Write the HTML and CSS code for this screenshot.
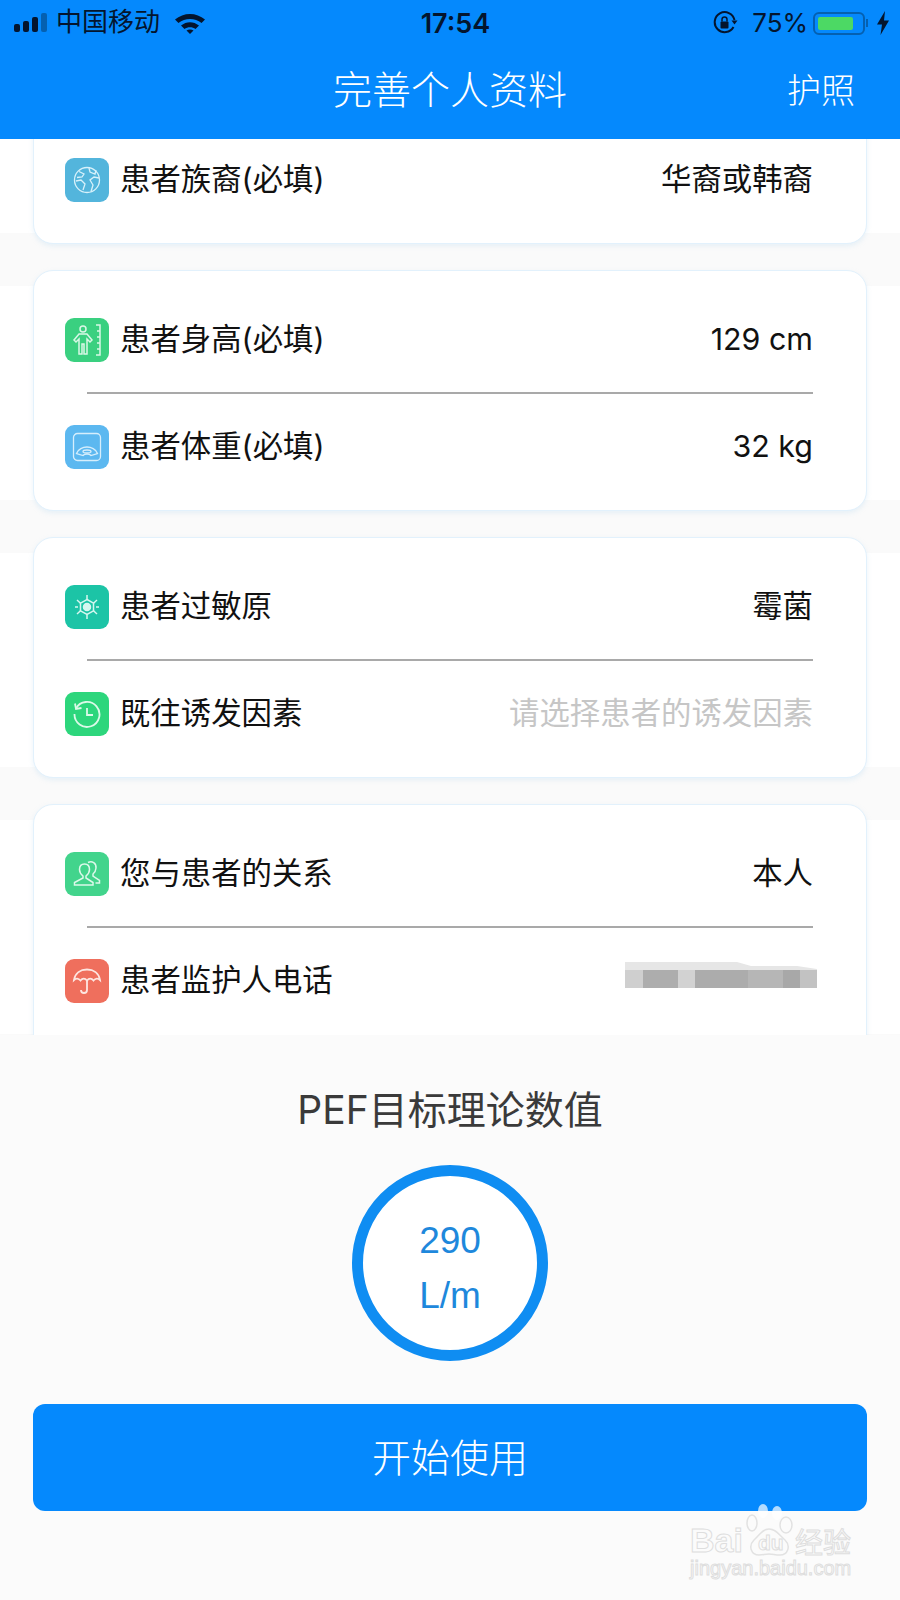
FILE: index.html
```
<!DOCTYPE html>
<html lang="zh-CN">
<head>
    <meta charset="UTF-8">
    <meta name="viewport" content="width=device-width, initial-scale=1.0">
    <title>完善个人资料</title>
    <link rel="stylesheet" href="styles.css">
</head>
<body>
<div class="page">

    <!-- Status bar -->
    <div class="status-bar">
        <div class="status-left">
            <svg class="signal" width="34" height="20" viewBox="0 0 34 20">
                <rect x="0" y="11" width="6" height="8" rx="2" fill="#04152e"/>
                <rect x="9" y="8" width="6" height="11" rx="2" fill="#04152e"/>
                <rect x="18" y="4" width="6" height="15" rx="2" fill="#04152e"/>
                <rect x="27" y="0" width="6" height="19" rx="2" fill="#0560b0"/>
            </svg>
            <span class="carrier">中国移动</span>
            <svg class="wifi" width="32" height="24" viewBox="0 0 32 24">
                <path d="M1 8.500C9.500 1 22.500 1 31 8.500L27.500 12C21 6.500 11 6.500 4.500 12Z" fill="#04152e"/>
                <path d="M7 14.500C12.500 10 19.500 10 25 14.500L21.500 18C18.500 15.500 13.500 15.500 10.500 18Z" fill="#04152e"/>
                <path d="M12.500 19.500C14.500 18 17.500 18 19.500 19.500L16 23Z" fill="#04152e"/>
            </svg>
        </div>
        <div class="status-time">17:54</div>
        <div class="status-right">
            <svg class="rotation-lock" width="26" height="26" viewBox="0 0 26 26">
                <path d="M21.500 17A10 10 0 1 1 22.500 10" fill="none" stroke="#04152e" stroke-width="2"/>
                <path d="M19.500 10.500L25.500 10.500L22.500 14.500Z" fill="#04152e"/>
                <rect x="8.500" y="11.500" width="8" height="7" rx="1" fill="#04152e"/>
                <path d="M10 11.500V9.500a2.500 2.500 0 0 1 5 0V11.500" fill="none" stroke="#04152e" stroke-width="1.500"/>
            </svg>
            <span class="battery-pct">75%</span>
            <div class="battery">
                <div class="battery-level"></div>
            </div>
            <div class="battery-cap"></div>
            <svg class="bolt" width="14" height="24" viewBox="0 0 14 24">
                <path d="M9 0L1 13.500H6L4.500 24L13 9.500H8Z" fill="#04152e"/>
            </svg>
        </div>
    </div>

    <!-- Nav -->
    <div class="nav">
        <div></div>
        <div class="nav-title">完善个人资料</div>
        <div class="nav-action">护照</div>
    </div>

    <!-- Form cards -->
    <div class="list">
        <div class="card card-first">
            <div class="row">
                <span class="icon icon-globe">
                    <svg width="30" height="30" viewBox="0 0 30 30" fill="none" stroke="#d8f1fa" stroke-width="1.300">
                        <circle cx="15" cy="15" r="12.500"/>
                        <path d="M7 6.500L12 9L10 12L5 12.500M4 16L9 15L13 19L11 25M17 3L18 7L23 9L24 5M27 13L22 12L18 15L21 20L19 26.500"/>
                    </svg>
                </span>
                <span class="label">患者族裔(必填)</span>
                <span class="value">华裔或韩裔</span>
            </div>
        </div>

        <div class="card">
            <div class="row">
                <span class="icon icon-height">
                    <svg width="30" height="34" viewBox="0 0 30 34" fill="none" stroke="#d9f7e6" stroke-width="1.500">
                        <circle cx="11" cy="6" r="3"/>
                        <path d="M7 11H15L20 17L18 19L15 16V31H12V21H10V31H7V16L4 19L2 17Z"/>
                        <path d="M24 2H28V32H24M25 8H28M25 14H28M25 20H28M25 26H28"/>
                    </svg>
                </span>
                <span class="label">患者身高(必填)</span>
                <span class="value">129 cm</span>
            </div>
            <div class="divider"></div>
            <div class="row">
                <span class="icon icon-weight">
                    <svg width="30" height="30" viewBox="0 0 30 30" fill="none" stroke="#d6eefc" stroke-width="1.300">
                        <rect x="1.500" y="1.500" width="27" height="27" rx="4"/>
                        <path d="M4.500 21.500C6 17 11 15 15 15C19 15 24 17 25.500 21.500L19 23.500C17.500 21.500 12.500 21.500 11 23.500Z"/>
                        <ellipse cx="15" cy="19.500" rx="4" ry="1.500"/>
                    </svg>
                </span>
                <span class="label">患者体重(必填)</span>
                <span class="value">32 kg</span>
            </div>
        </div>

        <div class="card">
            <div class="row">
                <span class="icon icon-allergen">
                    <svg width="30" height="30" viewBox="0 0 30 30" fill="none" stroke="#d6f7f0" stroke-width="1.500">
                        <path d="M15 7.500L21.500 11.200V18.800L15 22.500L8.500 18.800V11.200Z"/>
                        <circle cx="15" cy="15" r="3.500" fill="#d6f7f0"/>
                        <path d="M15 7.500V3M15 22.500V27M8.500 11.200L5 8M21.500 18.800L25 22M8.500 18.800L5 22M21.500 11.200L25 8M3 15H6M24 15H27"/>
                    </svg>
                </span>
                <span class="label">患者过敏原</span>
                <span class="value">霉菌</span>
            </div>
            <div class="divider"></div>
            <div class="row">
                <span class="icon icon-history">
                    <svg width="30" height="30" viewBox="0 0 30 30" fill="none" stroke="#dcf9e9" stroke-width="1.800">
                        <path d="M4 9.500A12.500 12.500 0 1 1 2.500 15"/>
                        <path d="M3 4.500L4 10L9.500 9"/>
                        <path d="M15 9V16H21"/>
                    </svg>
                </span>
                <span class="label">既往诱发因素</span>
                <span class="value value-empty">请选择患者的诱发因素</span>
            </div>
        </div>

        <div class="card card-last">
            <div class="row">
                <span class="icon icon-relation">
                    <svg width="30" height="30" viewBox="0 0 30 30" fill="none" stroke="#dcf8ea" stroke-width="1.500">
                        <path d="M11 17C8.500 15 7.500 12.500 7.500 10.500C7.500 7 9.500 5 12.500 5C15.500 5 17.500 7 17.500 10.500C17.500 12.500 16.500 15 14 17V19L21 23.500V26H2.500V23.500L11 19Z"/>
                        <path d="M16 3.500C20 1.500 24.500 4 24 9C23.800 11.500 23 13.500 21 15V17L27.500 21.500V24H23.500"/>
                    </svg>
                </span>
                <span class="label">您与患者的关系</span>
                <span class="value">本人</span>
            </div>
            <div class="divider"></div>
            <div class="row">
                <span class="icon icon-umbrella">
                    <svg width="30" height="30" viewBox="0 0 30 30" fill="none" stroke="#fde6e1" stroke-width="1.800">
                        <path d="M2 14C3 7 8.500 3.500 15 3.500C21.500 3.500 27 7 28 14C26 12 23.500 12 21.500 14.500C19.500 12 17 12 15 14.500C13 12 10.500 12 8.500 14.500C6.500 12 4 12 2 14Z"/>
                        <path d="M15 14V24C15 28 9 28 9 24"/>
                    </svg>
                </span>
                <span class="label">患者监护人电话</span>
                <!-- masked phone number -->
                <svg class="masked" width="192" height="30" viewBox="0 0 192 30">
                    <path d="M0 3H112L126 7H172L192 10V12H0Z" fill="#e6e6e6"/>
                    <rect x="0" y="11" width="18" height="18" fill="#cfcfcf"/>
                    <rect x="18" y="11" width="35" height="18" fill="#adadad"/>
                    <rect x="53" y="11" width="17" height="18" fill="#d2d2d2"/>
                    <rect x="70" y="11" width="53" height="18" fill="#acacac"/>
                    <rect x="123" y="11" width="35" height="18" fill="#b6b6b6"/>
                    <rect x="158" y="11" width="17" height="18" fill="#a8a8a8"/>
                    <rect x="175" y="11" width="17" height="18" fill="#c2c2c2"/>
                </svg>
            </div>
        </div>
    </div>

    <!-- Bottom panel -->
    <div class="panel">
        <div class="panel-title">PEF目标理论数值</div>
        <div class="gauge">
            <span>290</span>
            <span>L/m</span>
        </div>
        <button class="start-btn">开始使用</button>

        <div class="watermark">
            <div class="wm-top">
                <span class="wm-bai">Bai</span>
                <svg class="wm-paw" width="50" height="54" viewBox="0 0 50 54">
                    <ellipse cx="18" cy="7" rx="5" ry="7" fill="#fff" fill-opacity=".7"/>
                    <ellipse cx="32" cy="9" rx="5" ry="7" fill="#fff" fill-opacity=".7"/>
                    <ellipse cx="7" cy="19" rx="5" ry="8" fill="none" stroke="#e2e2e2" stroke-width="1.500"/>
                    <ellipse cx="41" cy="21" rx="6" ry="8" fill="none" stroke="#e2e2e2" stroke-width="1.500"/>
                    <path d="M24 25C17 25 15 31 9 36C3 42 6 51 14 51C18 51 20 50 24 50C28 50 30 51 35 51C43 51 46 42 40 36C34 31 31 25 24 25Z" fill="none" stroke="#e2e2e2" stroke-width="1.500"/>
                </svg>
                <span class="wm-du">du</span>
                <span class="wm-cn">经验</span>
            </div>
            <div class="wm-url">jingyan.baidu.com</div>
        </div>
    </div>
</div>
</body>
</html>
```
FILE: styles.css
```
* {
    box-sizing: border-box;
}
body {
    margin: 0;
    font-family: Inter, "Noto Sans CJK SC", sans-serif;
    color: #111;
}
.page {
    width: 900px;
    height: 1600px;
    display: flex;
    flex-direction: column;
    overflow: hidden;
    background: #fff;
}

/* Status bar */
.status-bar {
    height: 46px;
    flex: none;
    display: grid;
    grid-template-columns: 1fr auto 1fr;
    align-items: center;
    padding: 0 10px 0 14px;
    background: #0589fd;
    color: #04152e;
    font-size: 26px;
    line-height: 1;
}
.status-left, .status-right {
    display: flex;
    align-items: center;
}
.status-right {
    justify-content: flex-end;
}
.carrier {
    margin: 0 0 3px 8px;
}
.wifi {
    margin-left: 14px;
}
.status-time {
    font-size: 27px;
    font-weight: 600;
    padding-left: 7px;
}
.battery-pct {
    margin-left: 14px;
}
.battery {
    width: 52px;
    height: 23px;
    margin-left: 5px;
    padding: 3px;
    border: 2px solid #0560b0;
    border-radius: 6px;
}
.battery-level {
    width: 35px;
    height: 100%;
    background: #4cd964;
    border-radius: 2px;
}
.battery-cap {
    width: 2px;
    height: 8px;
    margin-left: 1px;
    background: #0560b0;
}
.bolt {
    margin-left: 8px;
}

/* Nav */
.nav {
    height: 93px;
    flex: none;
    display: grid;
    grid-template-columns: 1fr auto 1fr;
    align-items: center;
    padding: 0 45px 6px 0;
    background: #0589fd;
    color: #fff;
    line-height: 1;
}
.nav-title {
    font-size: 39px;
    font-weight: 300;
    margin-left: 45px;
}
.nav-action {
    margin-top: 3px;
    font-size: 34px;
    font-weight: 300;
    text-align: right;
}

/* Cards */
.list {
    height: 896px;
    flex: none;
    overflow: hidden;
    display: flex;
    flex-direction: column;
    gap: 26px;
    padding: 0 33px;
    background: repeating-linear-gradient(#fff 0, #fff 94px, #fafafa 94px, #fafafa 147px, #fff 147px, #fff 267px);
}
.card {
    flex: none;
    padding: 16px 0 11px;
    background: #fff;
    border: 1px solid #e2f1fc;
    border-radius: 20px;
    box-shadow: 0 2px 5px rgba(170, 210, 240, 0.25);
}
.card-first {
    margin-top: -29px;
}
/* runs on below the panel */
.card-last {
    padding-bottom: 60px;
}
.row {
    height: 105px;
    display: flex;
    align-items: center;
    padding: 0 53px 0 31px;
    font-size: 30.4px;
    line-height: 1;
}
.divider {
    height: 2px;
    margin: 0 53px;
    background: #a9a9a9;
}
.icon {
    width: 44px;
    height: 44px;
    flex: none;
    display: flex;
    align-items: center;
    justify-content: center;
    margin-right: 11px;
    border-radius: 9px;
}
.icon-globe { background: #53b5dc; }
.icon-height { background: #3ad080; }
.icon-weight { background: #5cb8f0; }
.icon-allergen { background: #1cc4a6; }
.icon-history { background: #2dd67c; }
.icon-relation { background: #42d48c; }
.icon-umbrella { background: #ef6f5d; }
.label {
    flex: 1;
    padding-bottom: 1px;
}
.value {
    padding-bottom: 1px;
    color: #111;
}
.value-empty {
    color: #c6c6c6;
}
.masked {
    margin: 0 -4px 14px 0;
}

/* Bottom panel */
.panel {
    position: relative;
    flex: 1;
    display: flex;
    flex-direction: column;
    align-items: center;
    padding: 50px 33px 0;
    background: #fbfbfb;
}
.panel-title {
    font-size: 39px;
    line-height: 50px;
    color: #3a3a3a;
}
.gauge {
    width: 196px;
    height: 196px;
    margin-top: 30px;
    display: flex;
    flex-direction: column;
    align-items: center;
    justify-content: center;
    gap: 18px;
    padding-top: 9px;
    border: 11px solid #0f8df2;
    border-radius: 50%;
    background: #fff;
    color: #1e88dc;
    font-family: "Liberation Sans", sans-serif;
    font-size: 37px;
    line-height: 1;
}
.start-btn {
    width: 100%;
    height: 107px;
    margin-top: 43px;
    border: none;
    border-radius: 12px;
    background: #0589fd;
    color: #fff;
    font-family: inherit;
    font-size: 39px;
    font-weight: 300;
    line-height: 1;
}

/* Watermark over the corner */
.watermark {
    position: absolute;
    left: 688px;
    top: 469px;
    width: 170px;
    font-family: "Liberation Sans", "Noto Sans CJK SC", sans-serif;
    color: transparent;
    -webkit-text-stroke: 1px #dedede;
}
.wm-top {
    position: relative;
    height: 68px;
}
.wm-bai {
    position: absolute;
    left: 2px;
    top: 17px;
    font-size: 34px;
    font-weight: bold;
}
.wm-paw {
    position: absolute;
    left: 57px;
    top: 0;
}
.wm-du {
    position: absolute;
    left: 70px;
    top: 27px;
    font-size: 21px;
    font-weight: bold;
}
.wm-cn {
    position: absolute;
    left: 107px;
    top: 17px;
    font-size: 28px;
    white-space: nowrap;
}
.wm-url {
    margin-top: -15px;
    padding-left: 2px;
    font-size: 20px;
    white-space: nowrap;
}
```
